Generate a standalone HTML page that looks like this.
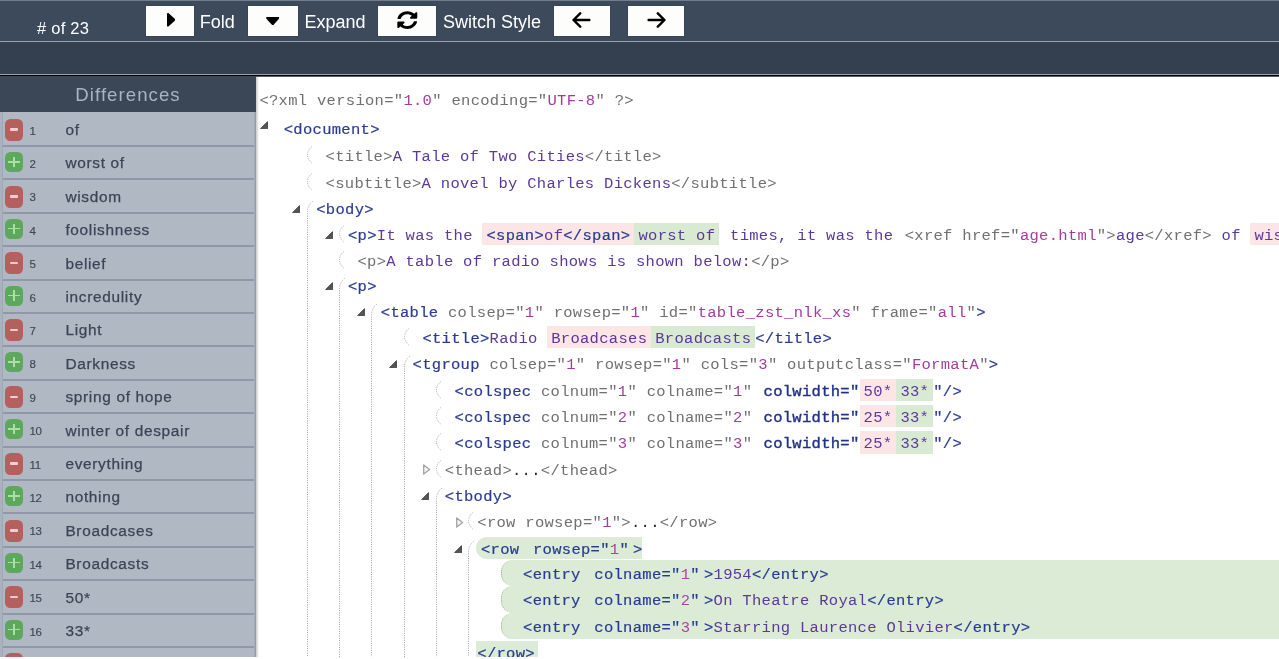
<!DOCTYPE html>
<html lang="en"><head><meta charset="utf-8"><title>XML Compare</title>
<style>
html,body{margin:0;padding:0}
body{width:1279px;height:659px;overflow:hidden;position:relative;background:#fff;will-change:transform;font-family:"Liberation Sans",sans-serif}
#top{position:absolute;left:0;top:0;width:1279px;height:41px;background:#3d4a5c;border-top:1px solid #737e8c;box-sizing:border-box}
#l1{position:absolute;left:0;top:41px;width:1279px;height:1px;background:#97a2b1}
#band{position:absolute;left:0;top:42px;width:1279px;height:32px;background:#343f4f}
#l2{position:absolute;left:0;top:74px;width:1279px;height:1px;background:#98a2b0}
#l3{position:absolute;left:0;top:75px;width:1279px;height:1px;background:#000}
#l4{position:absolute;left:0;top:76px;width:1279px;height:1px;background:#5a5f66}
.btn{position:absolute;top:6px;height:30px;background:#fdfdfc;box-shadow:0 0 0 1px #394456}
.btn svg{position:absolute}
.tl{position:absolute;color:#fff;font-size:18px;line-height:20px;top:11.7px;white-space:nowrap}
#cnt{position:absolute;left:37px;top:18.2px;color:#fff;font-size:16.5px;line-height:20px;letter-spacing:.25px;white-space:nowrap}
#side{position:absolute;left:0;top:76px;width:256px;height:583px;background:#b0b8c4;overflow:hidden}
#sh{position:absolute;left:0;top:0;width:256px;height:36px;background:#3b4756;color:#a9b3c1;font-size:18.6px;letter-spacing:1.05px;text-align:center;line-height:37px}
#sl{position:absolute;left:0;top:36px;width:2px;height:560px;background:#aab2be;border-right:1px solid #9fa8b5}
#sr{position:absolute;left:254px;top:36px;width:1px;height:560px;background:#a3abb8;border-right:1px solid #939cab}
#rows{position:absolute;left:0;top:-76px}
.rb{position:absolute;left:3px;width:251px;height:2px;background:#8f98a6}
.bd{position:absolute;left:5px;width:18px;border-radius:5.5px}
.bd.m{height:22px;background:#b65f5f}
.bd.p{height:20px;background:#5ea85e}
.bd.m i{position:absolute;left:5.2px;top:9.7px;width:7.5px;height:2.5px;background:#f6cdcd;border-radius:1px}
.bd.p i{position:absolute;left:3.4px;top:9.1px;width:11.2px;height:1.7px;background:#aae0a4}
.bd.p b{position:absolute;left:8.15px;top:4.9px;width:1.7px;height:10.2px;background:#aae0a4}
.no{position:absolute;left:29.5px;font-size:11.5px;letter-spacing:-.3px;color:#3e4856;line-height:14px;white-space:nowrap;-webkit-text-stroke:.15px #3e4856}
.lb{position:absolute;left:65.4px;font-size:15.4px;letter-spacing:.69px;color:#3b4554;line-height:18px;white-space:nowrap;-webkit-text-stroke:.25px #3b4554}
#shadow{position:absolute;left:256px;top:77px;width:3px;height:582px;background:linear-gradient(to right,#c9c9c9,#fff)}
#code{position:absolute;left:0;top:0;width:1279px;height:659px;font-family:"Liberation Mono","DejaVu Sans Mono",monospace;font-size:15.5px;letter-spacing:.3px}
#clip{position:absolute;left:256px;top:77px;width:1023px;height:582px;overflow:hidden}
#clip>#code{left:-256px;top:-77px}
.ln{position:absolute;white-space:pre;line-height:20px;height:20px}
.g{color:#707070}.b{color:#293b93;-webkit-text-stroke:.2px #293b93}.v{color:#a23c9b}.v2{color:#a8449f}.t{color:#5b389a}.d{color:#222}
.bb{color:#213188;-webkit-text-stroke:.4px #213188;padding-left:1.7px}
.del,.ins{display:inline-block;padding:0 4px;height:22.5px;line-height:26px;margin-top:-3px;vertical-align:top}
.del{background:#fbe5e5}.ins{background:#d9ead3}
.br{position:absolute}.br path{fill:none;stroke:#a0a0a0;stroke-width:1;stroke-dasharray:1 1.3}
.tg{position:absolute}
.gblk{position:absolute;background:#dcebd5}
.gblk.ent{border-radius:12px 0 0 12px;border-left:1px dotted #9aa895;box-sizing:border-box}
#bot{position:absolute;left:0;top:657px;width:1279px;height:2px;background:#fff}
</style></head><body>
<div id="top"></div><div id="l1"></div><div id="band"></div><div id="l2"></div><div id="l3"></div><div id="l4"></div>
<div id="cnt"># of 23</div>
<div class="btn" style="left:146px;width:48px"><svg style="left:20.9px;top:7px" width="8.4" height="13.6" viewBox="0 107 169 298" preserveAspectRatio="none"><path fill="#000" d="M0 384.662V127.338c0-17.818 21.543-26.741 34.142-14.142l128.662 128.662c7.81 7.81 7.81 20.474 0 28.284L34.142 398.804C21.543 411.404 0 402.48 0 384.662z"/></svg></div>
<div class="tl" style="left:199.8px">Fold</div>
<div class="btn" style="left:248px;width:50px"><svg style="left:17.6px;top:10.9px" width="13.5" height="8.2" viewBox="8 192 304 169" preserveAspectRatio="none"><path fill="#000" d="M31.3 192h257.3c17.8 0 26.7 21.5 14.1 34.1L174.1 354.8c-7.8 7.8-20.5 7.8-28.3 0L17.2 226.1C4.6 213.5 13.5 192 31.3 192z"/></svg></div>
<div class="tl" style="left:304.4px">Expand</div>
<div class="btn" style="left:378px;width:58px"><svg style="left:19.3px;top:4.9px" width="20.6" height="18.2" viewBox="0 0 512 512" preserveAspectRatio="none"><path fill="#000" d="M370.72 133.28C339.458 104.008 298.888 87.962 255.848 88c-77.458.068-144.328 53.178-162.791 126.85-1.344 5.363-6.122 9.15-11.651 9.15H24.103c-7.498 0-13.194-6.807-11.807-14.176C33.933 94.924 134.813 8 256 8c66.448 0 126.791 26.136 171.315 68.685L463.03 40.97C478.149 25.851 504 36.559 504 57.941V192c0 13.255-10.745 24-24 24H345.941c-21.382 0-32.09-25.851-16.971-40.971l41.75-41.749zM32 296h134.059c21.382 0 32.09 25.851 16.971 40.971l-41.75 41.75c31.262 29.273 71.835 45.319 114.876 45.28 77.418-.07 144.315-53.144 162.787-126.849 1.344-5.363 6.122-9.15 11.651-9.15h57.304c7.498 0 13.194 6.807 11.807 14.176C478.067 417.076 377.187 504 256 504c-66.448 0-126.791-26.136-171.315-68.685L48.97 471.03C33.851 486.149 8 475.441 8 454.059V320c0-13.255 10.745-24 24-24z"/></svg></div>
<div class="tl" style="left:442.9px">Switch Style</div>
<div class="btn" style="left:554px;width:56px"><svg style="left:18.2px;top:5.8px" width="19" height="16" viewBox="0 0 19 16"><path d="M8.2 1.3L1.5 8L8.2 14.7M1.8 8H17.4" fill="none" stroke="#000" stroke-width="2.4" stroke-linecap="round" stroke-linejoin="round"/></svg></div>
<div class="btn" style="left:628px;width:56px"><svg style="left:18.6px;top:5.8px" width="19" height="16" viewBox="0 0 19 16"><path d="M10.8 1.3L17.5 8L10.8 14.7M17.2 8H1.6" fill="none" stroke="#000" stroke-width="2.4" stroke-linecap="round" stroke-linejoin="round"/></svg></div>
<div id="side"><div id="sh">Differences</div><div id="sl"></div><div id="sr"></div><div id="rows">
<div class="rb" style="top:145px"></div>
<div class="bd m" style="top:118.7px"><i></i></div>
<div class="no" style="top:123.6px">1</div>
<div class="lb" style="top:121px">of</div>
<div class="rb" style="top:178px"></div>
<div class="bd p" style="top:151.9px"><i></i><b></b></div>
<div class="no" style="top:157px">2</div>
<div class="lb" style="top:154.4px">worst of</div>
<div class="rb" style="top:212px"></div>
<div class="bd m" style="top:185.5px"><i></i></div>
<div class="no" style="top:190.4px">3</div>
<div class="lb" style="top:187.8px">wisdom</div>
<div class="rb" style="top:245px"></div>
<div class="bd p" style="top:218.7px"><i></i><b></b></div>
<div class="no" style="top:223.8px">4</div>
<div class="lb" style="top:221.2px">foolishness</div>
<div class="rb" style="top:279px"></div>
<div class="bd m" style="top:252.3px"><i></i></div>
<div class="no" style="top:257.2px">5</div>
<div class="lb" style="top:254.6px">belief</div>
<div class="rb" style="top:312px"></div>
<div class="bd p" style="top:285.5px"><i></i><b></b></div>
<div class="no" style="top:290.6px">6</div>
<div class="lb" style="top:288px">incredulity</div>
<div class="rb" style="top:345px"></div>
<div class="bd m" style="top:319.1px"><i></i></div>
<div class="no" style="top:324px">7</div>
<div class="lb" style="top:321.4px">Light</div>
<div class="rb" style="top:379px"></div>
<div class="bd p" style="top:352.3px"><i></i><b></b></div>
<div class="no" style="top:357.4px">8</div>
<div class="lb" style="top:354.8px">Darkness</div>
<div class="rb" style="top:412px"></div>
<div class="bd m" style="top:385.9px"><i></i></div>
<div class="no" style="top:390.8px">9</div>
<div class="lb" style="top:388.2px">spring of hope</div>
<div class="rb" style="top:446px"></div>
<div class="bd p" style="top:419.1px"><i></i><b></b></div>
<div class="no" style="top:424.2px">10</div>
<div class="lb" style="top:421.6px">winter of despair</div>
<div class="rb" style="top:479px"></div>
<div class="bd m" style="top:452.7px"><i></i></div>
<div class="no" style="top:457.6px">11</div>
<div class="lb" style="top:455px">everything</div>
<div class="rb" style="top:512px"></div>
<div class="bd p" style="top:485.9px"><i></i><b></b></div>
<div class="no" style="top:491px">12</div>
<div class="lb" style="top:488.4px">nothing</div>
<div class="rb" style="top:546px"></div>
<div class="bd m" style="top:519.5px"><i></i></div>
<div class="no" style="top:524.4px">13</div>
<div class="lb" style="top:521.8px">Broadcases</div>
<div class="rb" style="top:579px"></div>
<div class="bd p" style="top:552.7px"><i></i><b></b></div>
<div class="no" style="top:557.8px">14</div>
<div class="lb" style="top:555.2px">Broadcasts</div>
<div class="rb" style="top:613px"></div>
<div class="bd m" style="top:586.3px"><i></i></div>
<div class="no" style="top:591.2px">15</div>
<div class="lb" style="top:588.6px">50*</div>
<div class="rb" style="top:646px"></div>
<div class="bd p" style="top:619.5px"><i></i><b></b></div>
<div class="no" style="top:624.6px">16</div>
<div class="lb" style="top:622px">33*</div>
<div class="rb" style="top:679px"></div>
<div class="bd m" style="top:653.1px"><i></i></div>
<div class="no" style="top:658px">17</div>
<div class="lb" style="top:655.4px">25*</div>
</div></div>
<div id="shadow"></div>
<div id="clip"><div id="code">
<div class="ln" style="left:259.4px;top:90.5px"><span class="g">&lt;?xml version="</span><span class="v">1.0</span><span class="g">" encoding="</span><span class="v">UTF-8</span><span class="g">" ?&gt;</span></div>
<svg class="tg" style="left:260px;top:121.2px" width="8" height="8" viewBox="0 0 8 8"><path d="M7.6 0.6V7.6H0.6Z" fill="#555" stroke="#333" stroke-width="0.8" stroke-linejoin="round"/></svg>
<div class="ln" style="left:283.75px;top:119.75px"><span class="b">&lt;document&gt;</span></div>
<svg class="br" style="left:307px;top:146.3px" width="7" height="18" viewBox="0 0 7 18"><path d="M5.2 0.2Q0.5 4 0.5 8.8Q0.5 13.6 5.2 17.4"/></svg>
<div class="ln" style="left:325.6px;top:147px"><span class="g">&lt;title&gt;</span><span class="t">A Tale of Two Cities</span><span class="g">&lt;/title&gt;</span></div>
<svg class="br" style="left:307px;top:172.8px" width="7" height="18" viewBox="0 0 7 18"><path d="M5.2 0.2Q0.5 4 0.5 8.8Q0.5 13.6 5.2 17.4"/></svg>
<div class="ln" style="left:325.6px;top:173.5px"><span class="g">&lt;subtitle&gt;</span><span class="t">A novel by Charles Dickens</span><span class="g">&lt;/subtitle&gt;</span></div>
<svg class="br" style="left:307px;top:201px" width="7" height="640" viewBox="0 0 7 640"><path d="M5.8 0.2Q0.5 4.5 0.5 11V640"/></svg>
<svg class="tg" style="left:292px;top:204.75px" width="8" height="8" viewBox="0 0 8 8"><path d="M7.6 0.6V7.6H0.6Z" fill="#555" stroke="#333" stroke-width="0.8" stroke-linejoin="round"/></svg>
<div class="ln" style="left:316.25px;top:199.75px"><span class="b">&lt;body&gt;</span></div>
<svg class="br" style="left:339px;top:225.05px" width="7" height="18" viewBox="0 0 7 18"><path d="M5.2 0.2Q0.5 4 0.5 8.8Q0.5 13.6 5.2 17.4"/></svg>
<svg class="tg" style="left:324.5px;top:230.75px" width="8" height="8" viewBox="0 0 8 8"><path d="M7.6 0.6V7.6H0.6Z" fill="#555" stroke="#333" stroke-width="0.8" stroke-linejoin="round"/></svg>
<div class="ln" style="left:348px;top:225.75px"><span class="b">&lt;p&gt;</span><span class="t">It was the </span><span class="del"><span class="b">&lt;span&gt;</span><span class="t">of</span><span class="b">&lt;/span&gt;</span></span><span class="ins"><span class="t">worst of</span></span><span style="padding-left:1.2px"></span><span class="t"> times, it was the </span><span style="padding-left:1.8px"></span><span class="g">&lt;xref href="</span><span class="v">age.html</span><span class="g">"&gt;</span><span class="t">age</span><span class="g">&lt;/xref&gt;</span><span class="t"> of </span><span class="del"><span class="t">wisdom</span></span><span class="ins"><span class="t">foolishness</span></span></div>
<svg class="br" style="left:339px;top:250.8px" width="7" height="18" viewBox="0 0 7 18"><path d="M5.2 0.2Q0.5 4 0.5 8.8Q0.5 13.6 5.2 17.4"/></svg>
<div class="ln" style="left:357.5px;top:251.5px"><span class="g">&lt;p&gt;</span><span class="t">A table of radio shows is shown below:</span><span class="g">&lt;/p&gt;</span></div>
<svg class="br" style="left:339px;top:278px" width="7" height="640" viewBox="0 0 7 640"><path d="M5.8 0.2Q0.5 4.5 0.5 11V640"/></svg>
<svg class="tg" style="left:324.5px;top:282.25px" width="8" height="8" viewBox="0 0 8 8"><path d="M7.6 0.6V7.6H0.6Z" fill="#555" stroke="#333" stroke-width="0.8" stroke-linejoin="round"/></svg>
<div class="ln" style="left:348px;top:277.25px"><span class="b">&lt;p&gt;</span></div>
<svg class="br" style="left:371px;top:304px" width="7" height="640" viewBox="0 0 7 640"><path d="M5.8 0.2Q0.5 4.5 0.5 11V640"/></svg>
<svg class="tg" style="left:357px;top:308.25px" width="8" height="8" viewBox="0 0 8 8"><path d="M7.6 0.6V7.6H0.6Z" fill="#555" stroke="#333" stroke-width="0.8" stroke-linejoin="round"/></svg>
<div class="ln" style="left:380.8px;top:303.25px"><span class="b">&lt;table</span><span class="g"> colsep="</span><span class="v">1</span><span class="g">" rowsep="</span><span class="v">1</span><span class="g">" id="</span><span class="v">table_zst_nlk_xs</span><span class="g">" frame="</span><span class="v">all</span><span class="g">"</span><span class="b">&gt;</span></div>
<svg class="br" style="left:404px;top:327.8px" width="7" height="18" viewBox="0 0 7 18"><path d="M5.2 0.2Q0.5 4 0.5 8.8Q0.5 13.6 5.2 17.4"/></svg>
<div class="ln" style="left:422.4px;top:328.5px"><span class="b">&lt;title&gt;</span><span class="t">Radio </span><span class="del"><span class="t">Broadcases</span></span><span class="ins"><span class="t">Broadcasts</span></span><span class="b">&lt;/title&gt;</span></div>
<svg class="br" style="left:404px;top:356px" width="7" height="640" viewBox="0 0 7 640"><path d="M5.8 0.2Q0.5 4.5 0.5 11V640"/></svg>
<svg class="tg" style="left:389px;top:360.25px" width="8" height="8" viewBox="0 0 8 8"><path d="M7.6 0.6V7.6H0.6Z" fill="#555" stroke="#333" stroke-width="0.8" stroke-linejoin="round"/></svg>
<div class="ln" style="left:412.6px;top:355.25px"><span class="b">&lt;tgroup</span><span class="g"> colsep="</span><span class="v">1</span><span class="g">" rowsep="</span><span class="v">1</span><span class="g">" cols="</span><span class="v">3</span><span class="g">" outputclass="</span><span class="v">FormatA</span><span class="g">"</span><span class="b">&gt;</span></div>
<svg class="br" style="left:436px;top:380.8px" width="7" height="18" viewBox="0 0 7 18"><path d="M5.2 0.2Q0.5 4 0.5 8.8Q0.5 13.6 5.2 17.4"/></svg>
<div class="ln" style="left:454.6px;top:381.5px"><span class="b">&lt;colspec</span><span class="g"> colnum="</span><span class="v">1</span><span class="g">" colname="</span><span class="v">1</span><span class="g">" </span><span class="bb">colwidth="</span><span class="del"><span class="t">50*</span></span><span class="ins"><span class="t">33*</span></span><span class="b">"/&gt;</span></div>
<svg class="br" style="left:436px;top:407.05px" width="7" height="18" viewBox="0 0 7 18"><path d="M5.2 0.2Q0.5 4 0.5 8.8Q0.5 13.6 5.2 17.4"/></svg>
<div class="ln" style="left:454.6px;top:407.75px"><span class="b">&lt;colspec</span><span class="g"> colnum="</span><span class="v">2</span><span class="g">" colname="</span><span class="v">2</span><span class="g">" </span><span class="bb">colwidth="</span><span class="del"><span class="t">25*</span></span><span class="ins"><span class="t">33*</span></span><span class="b">"/&gt;</span></div>
<svg class="br" style="left:436px;top:433.3px" width="7" height="18" viewBox="0 0 7 18"><path d="M5.2 0.2Q0.5 4 0.5 8.8Q0.5 13.6 5.2 17.4"/></svg>
<div class="ln" style="left:454.6px;top:434px"><span class="b">&lt;colspec</span><span class="g"> colnum="</span><span class="v">3</span><span class="g">" colname="</span><span class="v">3</span><span class="g">" </span><span class="bb">colwidth="</span><span class="del"><span class="t">25*</span></span><span class="ins"><span class="t">33*</span></span><span class="b">"/&gt;</span></div>
<svg class="br" style="left:436px;top:459.8px" width="7" height="18" viewBox="0 0 7 18"><path d="M5.2 0.2Q0.5 4 0.5 8.8Q0.5 13.6 5.2 17.4"/></svg>
<svg class="tg" style="left:423.2px;top:464.1px" width="8" height="11" viewBox="0 0 8 11"><path d="M0.7 0.9L6.6 5.5L0.7 10.1Z" fill="#f4f4f4" stroke="#a3a3a3" stroke-width="1.3" stroke-linejoin="round"/></svg>
<div class="ln" style="left:444.8px;top:460.5px"><span class="g">&lt;thead&gt;</span><span class="d">...</span><span class="g">&lt;/thead&gt;</span></div>
<svg class="br" style="left:436px;top:488px" width="7" height="640" viewBox="0 0 7 640"><path d="M5.8 0.2Q0.5 4.5 0.5 11V640"/></svg>
<svg class="tg" style="left:421.3px;top:491.75px" width="8" height="8" viewBox="0 0 8 8"><path d="M7.6 0.6V7.6H0.6Z" fill="#555" stroke="#333" stroke-width="0.8" stroke-linejoin="round"/></svg>
<div class="ln" style="left:444.8px;top:486.75px"><span class="b">&lt;tbody&gt;</span></div>
<svg class="br" style="left:468px;top:512.3px" width="7" height="18" viewBox="0 0 7 18"><path d="M5.2 0.2Q0.5 4 0.5 8.8Q0.5 13.6 5.2 17.4"/></svg>
<svg class="tg" style="left:455.7px;top:516.6px" width="8" height="11" viewBox="0 0 8 11"><path d="M0.7 0.9L6.6 5.5L0.7 10.1Z" fill="#f4f4f4" stroke="#a3a3a3" stroke-width="1.3" stroke-linejoin="round"/></svg>
<div class="ln" style="left:477.3px;top:513px"><span class="g">&lt;row rowsep="</span><span class="v">1</span><span class="g">"&gt;</span><span class="d">...</span><span class="g">&lt;/row&gt;</span></div>
<div class="gblk" style="left:476px;top:536.5px;width:166px;height:22.5px;border-radius:11px 0 0 11px"></div>
<svg class="br" style="left:468px;top:541px" width="7" height="640" viewBox="0 0 7 640"><path d="M5.8 0.2Q0.5 4.5 0.5 11V640"/></svg>
<svg class="tg" style="left:453.8px;top:544.75px" width="8" height="8" viewBox="0 0 8 8"><path d="M7.6 0.6V7.6H0.6Z" fill="#555" stroke="#333" stroke-width="0.8" stroke-linejoin="round"/></svg>
<div class="ln" style="left:481px;top:539.75px"><span class="b">&lt;row</span><span class="b"> </span><span style="padding-left:4px"></span><span class="b">rowsep="</span><span class="v2">1</span><span class="b">"</span><span style="padding-left:4px"></span><span class="b">&gt;</span></div>
<div class="gblk ent" style="left:500.6px;top:560px;width:778.4px;height:26.25px"></div>
<div class="ln" style="left:523.1px;top:565px"><span class="b">&lt;entry</span><span class="b"> </span><span style="padding-left:4px"></span><span class="b">colname="</span><span class="v2">1</span><span class="b">"</span><span style="padding-left:4px"></span><span class="b">&gt;</span><span class="t">1954</span><span class="b">&lt;/entry&gt;</span></div>
<div class="gblk ent" style="left:500.6px;top:586.25px;width:778.4px;height:26.25px"></div>
<div class="ln" style="left:523.1px;top:591.25px"><span class="b">&lt;entry</span><span class="b"> </span><span style="padding-left:4px"></span><span class="b">colname="</span><span class="v2">2</span><span class="b">"</span><span style="padding-left:4px"></span><span class="b">&gt;</span><span class="t">On Theatre Royal</span><span class="b">&lt;/entry&gt;</span></div>
<div class="gblk ent" style="left:500.6px;top:612.5px;width:778.4px;height:26.25px"></div>
<div class="ln" style="left:523.1px;top:617.5px"><span class="b">&lt;entry</span><span class="b"> </span><span style="padding-left:4px"></span><span class="b">colname="</span><span class="v2">3</span><span class="b">"</span><span style="padding-left:4px"></span><span class="b">&gt;</span><span class="t">Starring Laurence Olivier</span><span class="b">&lt;/entry&gt;</span></div>
<div class="gblk" style="left:475.8px;top:641px;width:61.8px;height:20px"></div>
<div class="ln" style="left:477.3px;top:643.75px"><span class="b">&lt;/row&gt;</span></div>
</div></div>
<div id="bot"></div>
</body></html>
